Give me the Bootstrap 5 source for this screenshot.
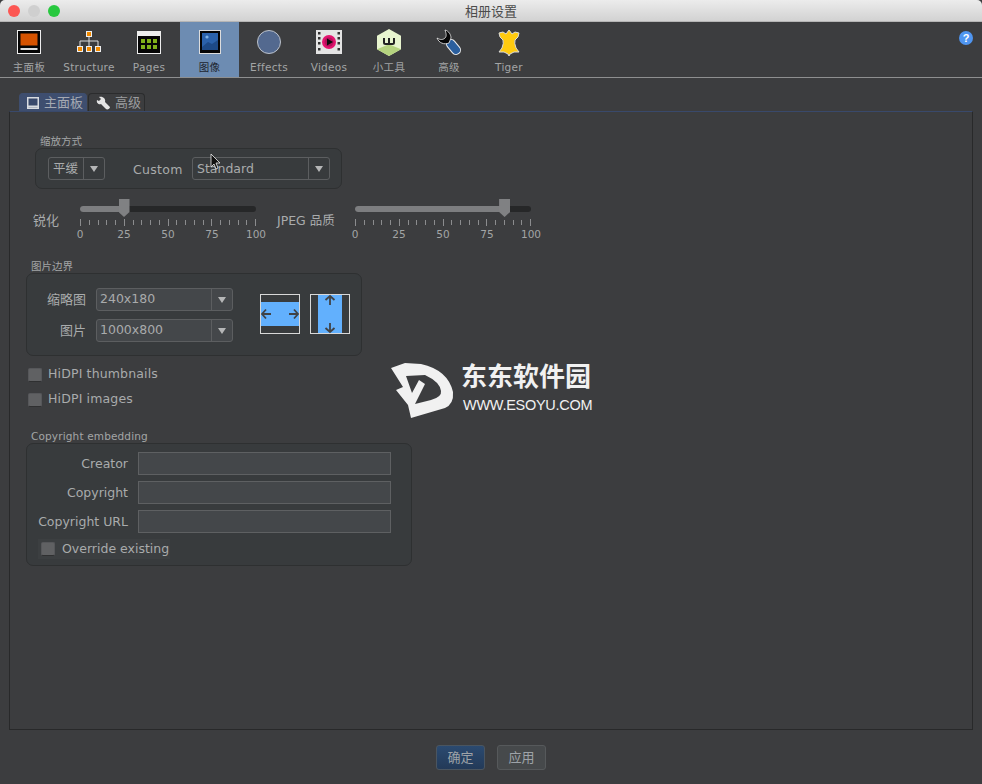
<!DOCTYPE html>
<html lang="zh">
<head>
    <meta charset="UTF-8">
    <meta name="viewport" content="width=device-width, initial-scale=1.0">
    <title>相册设置</title>
    <link href="https://cdn.jsdelivr.net/npm/bootstrap@5.3.0/dist/css/bootstrap.min.css" rel="stylesheet">
    <script src="https://cdn.jsdelivr.net/npm/bootstrap@5.3.0/dist/js/bootstrap.bundle.min.js"></script>
    <style>
        html, body { height: 784px; overflow: hidden; }
        body {
            background: #3c3d3f;
            color: #a9abac;
            font-family: "DejaVu Sans", "Noto Sans CJK SC", sans-serif;
            font-size: 12px;
            line-height: 1;
        }
        .titlebar {
            height: 22px;
            background: linear-gradient(#ececec, #d2d2d2);
            border-bottom: 1px solid #b5b5b5;
            border-radius: 5px 5px 0 0;
            padding-left: 8px;
            color: #4c4c4c;
            font-size: 13px;
        }
        .titlebar .title { position: absolute; left: 0; right: 0; top: 5px; text-align: center; }
        .light { width: 12px; height: 12px; border-radius: 50%; }
        .toolbar { height: 56px; border-bottom: 1px solid #8e8f90; margin-left: -1px; }
        .tool { width: 60px; font-size: 10.5px; letter-spacing: .3px; color: #a3a5a6; padding-top: 8px; white-space: nowrap; }
        .tool svg { display: block; margin-bottom: 8px; }
        .tool.active { background: #6d8cb2; color: #1d2530; border-left: 1px solid #3c3d3f; }
        .help { margin: 9px 9px 0 auto; }
        .tabs { height: 33px; padding: 15px 0 0 19px; border: 0; gap: 1px; }
        .tabs .nav-link {
            height: 18px; padding: 0 3px 0 7px; font-size: 13px; color: #9a9c9e;
            background: #3c3d3f; border: 1px solid #2b2c2d; border-bottom: 0; border-radius: 4px 4px 0 0;
            display: flex; align-items: center; gap: 4px;
        }
        .tabs .nav-link.active { background: #3e4e6f; color: #a5a9b2; border-color: #3e4e6f; gap: 5px; }
        .panel {
            margin: 0 9px; height: 619px; padding: 22px 0 0 16px;
            border: 1px solid #28292a; border-top-color: #39496b;
        }
        .legend { font-size: 10.5px; height: 12px; margin: 2px 0 0 5px; color: #a3a5a6; }
        .group { background: #383b3d; border: 1px solid #2e3031; border-radius: 7px; }
        .combo { height: 23px; border: 1px solid #5c5e60; border-radius: 3px; font-size: 12.5px; color: #a9abac; }
        .combo .val { flex: 1; padding-left: 4px; line-height: 22px; white-space: nowrap; }
        .combo .arrow { width: 21px; border-left: 1px solid #5c5e60; display: flex; align-items: center; justify-content: center; }
        .combo .arrow::after { content: ""; border: 4px solid transparent; border-top: 6px solid #b5b6b7; border-bottom: 0; }
        .combo.fill { background: #44474a; }
        .combo.fill .val { padding-left: 3px; line-height: 20px; }
        .side-label { font-size: 13px; white-space: nowrap; }
        .slider { width: 176px; flex: none; }
        .track { height: 6px; border-radius: 3px; background: #262728; margin: 7px 0; position: relative; }
        .track .fill { height: 6px; border-radius: 3px; background: #7d7e80; }
        .thumb { position: absolute; top: -7px; width: 11px; height: 18px; margin-left: -5.5px; background: #808183; clip-path: polygon(0 0, 100% 0, 100% 72%, 50% 100%, 0 72%); }
        .ticks { height: 7px; align-items: flex-start; }
        .ticks i { width: 1px; height: 5px; margin-top: 1px; background: #8b8c8e; display: block; }
        .ticks i.major { height: 7px; margin-top: 0; }
        .nums { margin-top: 3px; font-size: 10.5px; color: #a3a5a6; height: 12px; }
        .nums span { width: 0; display: flex; justify-content: center; }
        .form-check-input.box:disabled {
            width: 14px; height: 14px; margin: 0; float: none; flex: none; opacity: 1;
            background: #606163; border: 1px solid #56575a; border-bottom-color: #2f3031; border-radius: 2px;
        }
        .check { height: 25px; font-size: 12.5px; letter-spacing: .15px; padding-left: 2px; gap: 6px; white-space: nowrap; }
        .check.override { height: 20px; margin: 6px 0 0 11px; width: 132px; background: #3c3f41; padding-left: 3px; gap: 7px; letter-spacing: 0; }
        .field-label { text-align: right; flex: none; font-size: 13px; }
        .copy-label { text-align: right; flex: none; width: 101px; font-size: 12.5px; padding-top: 2px; }
        .form-control.field:disabled {
            width: 253px; height: 23px; padding: 0; margin-left: 2px; background: #44474a; border: 1px solid #5e6062; border-radius: 0; flex: none;
        }
        .footer .btn {
            width: 49px; height: 25px; padding: 0; font-size: 13px; color: #9ea3a8; border-radius: 3px;
        }
        .btn-ok { background: linear-gradient(#2b4a70, #233a58); border: 1px solid #4a5560; }
        .btn-apply { background: #46494b; border: 1px solid #56595b; }
        .watermark { position: absolute; left: 390px; top: 360px; color: #f1f1f1; }
        .wm-cn { font-size: 26px; font-weight: 700; position: absolute; left: 71px; top: 1px; white-space: nowrap; line-height: 32px; }
        .wm-en { font-family: "Liberation Sans", sans-serif; font-size: 14.5px; position: absolute; left: 73px; top: 38px; white-space: nowrap; letter-spacing: -.28px; }
        .cursor { position: absolute; left: 210px; top: 153px; }
    </style>
</head>
<body class="position-relative">
    <div class="titlebar d-flex align-items-center gap-2 position-relative">
        <span class="light" style="background:#fc5753"></span>
        <span class="light" style="background:#cfcfcf"></span>
        <span class="light" style="background:#28c83f"></span>
        <span class="title">相册设置</span>
    </div>

    <div class="toolbar d-flex">
        <div class="tool d-flex flex-column align-items-center">
            <svg width="24" height="24" viewBox="0 0 24 24"><rect width="24" height="24" fill="#eee"/><rect x="1" y="1" width="22" height="22" fill="#050505"/><rect x="3.5" y="3.5" width="17" height="12" fill="#d65300"/><rect x="3.5" y="18" width="17" height="2" fill="#ddd"/></svg>
            <span>主面板</span>
        </div>
        <div class="tool d-flex flex-column align-items-center">
            <svg width="26" height="24" viewBox="0 0 26 24"><path d="M13 7v4M4 16v-5h18v5M13 11v5" stroke="#ddd" fill="none"/><g fill="#f28a00" stroke="#eee"><rect x="10.500" y="1.500" width="5" height="5"/><rect x="1.500" y="16.500" width="5" height="5"/><rect x="10.500" y="16.500" width="5" height="5"/><rect x="19.500" y="16.500" width="5" height="5"/></g></svg>
            <span>Structure</span>
        </div>
        <div class="tool d-flex flex-column align-items-center">
            <svg width="24" height="24" viewBox="0 0 24 24"><rect width="24" height="23" y="1" fill="#eee"/><rect x="1" y="6" width="22" height="17" fill="#050505"/><g fill="#7fb01a"><rect x="4" y="9" width="4" height="4"/><rect x="10" y="9" width="4" height="4"/><rect x="16" y="9" width="4" height="4"/><rect x="4" y="15" width="4" height="4"/><rect x="10" y="15" width="4" height="4"/><rect x="16" y="15" width="4" height="4"/></g></svg>
            <span>Pages</span>
        </div>
        <div class="tool active d-flex flex-column align-items-center">
            <svg width="22" height="24" viewBox="0 0 22 24"><rect width="22" height="24" fill="#ddd"/><rect x="1" y="1" width="20" height="22" fill="#050505"/><rect x="3" y="3" width="16" height="17" fill="#2b62ab"/><path d="M3 17l6-5 4 2 6-4v10H3z" fill="#1d4a87"/><circle cx="8" cy="7" r="1.600" fill="#7fb2e5"/></svg>
            <span>图像</span>
        </div>
        <div class="tool d-flex flex-column align-items-center">
            <svg width="24" height="24" viewBox="0 0 24 24"><circle cx="12" cy="12" r="11.500" fill="#53698f" stroke="#bcc2cb"/></svg>
            <span>Effects</span>
        </div>
        <div class="tool d-flex flex-column align-items-center">
            <svg width="26" height="24" viewBox="0 0 26 24"><rect width="26" height="24" fill="#e4e4e4"/><circle cx="13" cy="12" r="7" fill="#e2136e"/><circle cx="13" cy="12" r="4.500" fill="#b5105c"/><path d="M11 8.500l6 3.500-6 3.500z" fill="#0c0c0c"/><g fill="#333"><rect x="2" y="2" width="2.500" height="2.500"/><rect x="2" y="7" width="2.500" height="2.500"/><rect x="2" y="12" width="2.500" height="2.500"/><rect x="2" y="18" width="2.500" height="2.500"/><rect x="21.500" y="2" width="2.500" height="2.500"/><rect x="21.500" y="7" width="2.500" height="2.500"/><rect x="21.500" y="12" width="2.500" height="2.500"/><rect x="21.500" y="18" width="2.500" height="2.500"/></g></svg>
            <span>Videos</span>
        </div>
        <div class="tool d-flex flex-column align-items-center">
            <svg width="24" height="27" viewBox="0 0 24 27" style="margin:-1px 0 6px"><path d="M12 0l12 6.700v13.600L12 27 0 20.300V6.700z" fill="#e8f5cf"/><path d="M0 20.300l12-5 12 5L12 27z" fill="#b5d37f"/><path d="M7 9v4.500q0 1.500 1.500 1.500h7q1.500 0 1.500-1.500V9" fill="none" stroke="#222" stroke-width="2"/><path d="M12 9v5" stroke="#222" stroke-width="2"/></svg>
            <span>小工具</span>
        </div>
        <div class="tool d-flex flex-column align-items-center">
            <svg width="26" height="26" viewBox="0 0 26 26" style="margin:-1px 0 7px"><path d="M15 15l5 6" stroke="#eee" stroke-width="10" stroke-linecap="round"/><path d="M15 15l5 6" stroke="#2b5f9e" stroke-width="8" stroke-linecap="round"/><path d="M9 1c4 1 6 5 6 8l-2 5c-5 2-10 0-12-5 3 2 6 2 8 0 2-2 1-5 0-8z" fill="#050505" stroke="#eee" stroke-width=".8"/></svg>
            <span>高级</span>
        </div>
        <div class="tool d-flex flex-column align-items-center">
            <svg width="26" height="27" viewBox="0 0 26 27" style="margin:-1px 0 6px"><path d="M3 4l4-1 3 2 3-4 3 4 3-2 4 1-1 4-3 3q-1 3 1 8l3 4-5 0-4 2-1 2-1-2-4-2-5 0 3-4q2-5 1-8l-3-3z" fill="#ffcb10" stroke="#dcdcdc" stroke-width="1"/></svg>
            <span>Tiger</span>
        </div>
        <svg class="help" width="14" height="14" viewBox="0 0 14 14" role="img" aria-label="帮助"><circle cx="7" cy="7" r="7" fill="#4f95f0"/><text x="7" y="11" text-anchor="middle" font-size="11" font-weight="700" fill="#fff" font-family="Liberation Sans">?</text></svg>
    </div>

    <ul class="nav nav-tabs tabs">
        <li class="nav-item"><a class="nav-link active" href="#">
            <svg width="12" height="12" viewBox="0 0 12 12"><rect x=".75" y=".75" width="10.500" height="10.500" fill="#39496b" stroke="#d8dbe0" stroke-width="1.500"/><rect x="1" y="8.500" width="10" height="2" fill="#d8dbe0"/></svg>
            主面板</a></li>
        <li class="nav-item"><a class="nav-link" href="#">
            <svg width="15" height="14" viewBox="0 0 15 14"><path d="M3 1l2 2-2 2-2-1c-1 3 2 5 4 4l5 5c1 1 4 0 4-2L9 6c1-3-2-6-6-5z" fill="#e4e4e4"/></svg>
            高级</a></li>
    </ul>

    <div class="panel">
        <div class="legend" style="margin-left:14px">缩放方式</div>
        <div class="group d-flex align-items-center" style="width:307px;height:41px;margin-left:9px;padding-left:12px">
            <div class="combo d-flex" style="width:57px"><span class="val">平缓</span><span class="arrow"></span></div>
            <span style="margin:3px 0 0 28px;width:59px;font-size:12.5px;letter-spacing:.3px">Custom</span>
            <div class="combo d-flex" style="width:138px"><span class="val">Standard</span><span class="arrow"></span></div>
        </div>

        <div class="d-flex" style="margin-top:10px;height:60px">
            <span class="side-label" style="margin:15px 0 0 7px;width:47px">锐化</span>
            <div class="slider">
                <div class="track"><div class="fill" style="width:25%"></div><div class="thumb" style="left:25%"></div></div>
                <div class="ticks d-flex justify-content-between" data-ticks></div>
                <div class="nums d-flex justify-content-between"><span>0</span><span>25</span><span>50</span><span>75</span><span>100</span></div>
            </div>
            <span class="side-label" style="margin:16px 0 0 21px;width:78px;font-size:12.5px">JPEG 品质</span>
            <div class="slider">
                <div class="track"><div class="fill" style="width:85%"></div><div class="thumb" style="left:85%"></div></div>
                <div class="ticks d-flex justify-content-between" data-ticks></div>
                <div class="nums d-flex justify-content-between"><span>0</span><span>25</span><span>50</span><span>75</span><span>100</span></div>
            </div>
        </div>

        <div class="legend">图片边界</div>
        <div class="group d-flex" style="width:336px;height:83px;padding-top:14px">
            <div class="d-flex flex-column" style="gap:8px">
                <div class="d-flex align-items-center"><span class="field-label" style="width:59px">缩略图</span><div class="combo fill d-flex" style="width:137px;margin-left:10px"><span class="val">240x180</span><span class="arrow"></span></div></div>
                <div class="d-flex align-items-center"><span class="field-label" style="width:59px">图片</span><div class="combo fill d-flex" style="width:137px;margin-left:10px"><span class="val">1000x800</span><span class="arrow"></span></div></div>
            </div>
            <div class="d-flex" style="margin:6px 0 0 27px;gap:10px">
                <svg width="40" height="40" viewBox="0 0 40 40"><rect x=".5" y=".5" width="39" height="39" fill="#383b3d" stroke="#d8d8d8"/><rect x="1" y="8" width="38" height="24" fill="#62b0fd"/><path d="M11 20H2M6 15.500L2 20l4 4.500M29 20h9M34 15.500l4 4.500-4 4.500" fill="none" stroke="#404245" stroke-width="1.800"/></svg>
                <svg width="40" height="40" viewBox="0 0 40 40"><rect x=".5" y=".5" width="39" height="39" fill="#383b3d" stroke="#d8d8d8"/><rect x="8" y="1" width="24" height="38" fill="#62b0fd"/><path d="M20 11V2M15.500 6L20 2l4.500 4M20 29v9M15.500 34l4.500 4 4.500-4" fill="none" stroke="#404245" stroke-width="1.800"/></svg>
            </div>
        </div>

        <div class="d-flex flex-column" style="margin-top:6px">
            <label class="check d-flex align-items-center"><input class="form-check-input box" type="checkbox" disabled>HiDPI thumbnails</label>
            <label class="check d-flex align-items-center"><input class="form-check-input box" type="checkbox" disabled>HiDPI images</label>
        </div>

        <div class="legend" style="margin-top:19px;letter-spacing:.15px">Copyright embedding</div>
        <div class="group" style="width:386px;height:123px;padding-top:8px">
            <div class="d-flex flex-column" style="gap:6px">
                <div class="d-flex align-items-center gap-2"><span class="copy-label">Creator</span><input class="form-control field" disabled></div>
                <div class="d-flex align-items-center gap-2"><span class="copy-label">Copyright</span><input class="form-control field" disabled></div>
                <div class="d-flex align-items-center gap-2"><span class="copy-label">Copyright URL</span><input class="form-control field" disabled></div>
            </div>
            <label class="check override d-flex align-items-center"><input class="form-check-input box" type="checkbox" disabled>Override existing</label>
        </div>
    </div>

    <div class="footer d-flex justify-content-center" style="gap:12px;margin-top:15px">
        <button type="button" class="btn btn-ok">确定</button>
        <button type="button" class="btn btn-apply">应用</button>
    </div>

    <!-- watermark and pointer sit on top of the dialog -->
    <div class="watermark">
        <svg width="70" height="60" viewBox="2 2 70 60"><path d="M3 10L17 5l16 1q27 6 32 28 1 12-8 16L23 60l-3-13L8 32l7-3z" fill="#f1f1f1"/><path d="M18 18l19-1q15 7 16 16 1 6-10 9l-16 4 10-20-6-4-7 13z" fill="#3c3d3f"/></svg>
        <div class="wm-cn">东东软件园</div>
        <div class="wm-en">WWW.ESOYU.COM</div>
    </div>
    <svg class="cursor" width="12" height="18" viewBox="0 0 12 18"><path d="M1 1v13l3-3 2 5 2-1-2-5h4z" fill="#111" stroke="#eee" stroke-width=".8"/></svg>

    <script>
        // 21 ticks per slider, every fifth one longer
        document.querySelectorAll("[data-ticks]").forEach(box => {
            for (let i = 0; i <= 20; i++) {
                const t = document.createElement("i");
                if (i % 5 === 0) t.className = "major";
                box.appendChild(t);
            }
        });
    </script>
</body>
</html>
